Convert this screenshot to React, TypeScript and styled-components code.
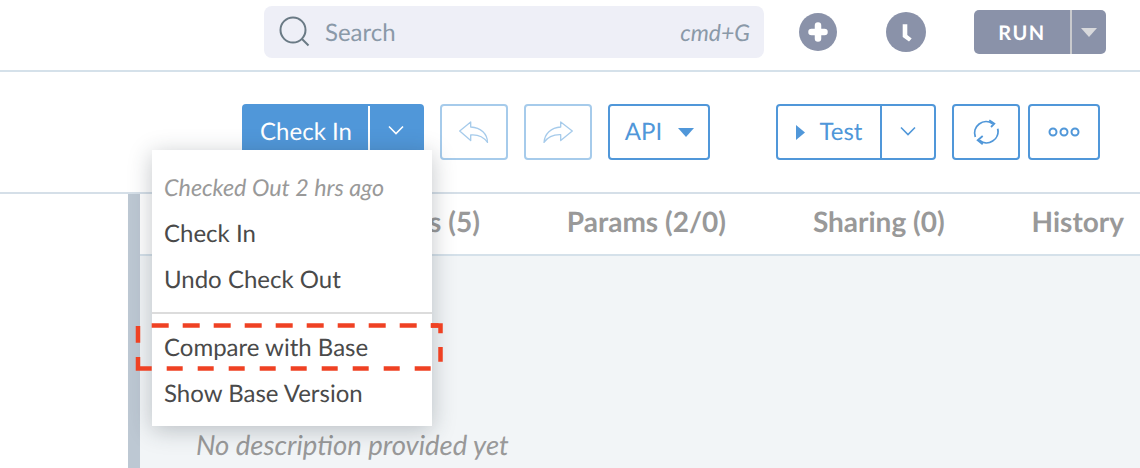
import { createGlobalStyle, styled } from 'styled-components';

const GlobalStyle = createGlobalStyle`
 html, body {
  margin: 0;
  padding: 0;
  background: #fff;
 }
 body {
  font-family: Lato, "Liberation Sans", sans-serif;
  text-rendering: geometricPrecision;
 }
 * {
  box-sizing: border-box;
 }
`;

const BLUE = '#5097d9';

const Chevron = ({ color }: { color: string }) => (
 <svg width="16" height="10" viewBox="0 0 16 10" fill="none">
  <path d="M1 1.500l7 7 7-7" stroke={color} strokeWidth="1.600" />
 </svg>
);

export default function App() {
 return (
  <Page>
   <GlobalStyle />
   <TopBar>
    <SearchBox>
     <svg width="34" height="34" viewBox="0 0 34 34" fill="none">
      <circle cx="15" cy="15" r="12.500" stroke="#6a7a85" strokeWidth="2" />
      <path d="M24 24l6.500 6.500" stroke="#6a7a85" strokeWidth="2" />
     </svg>
     <SearchLabel>Search</SearchLabel>
     <Shortcut>cmd+G</Shortcut>
    </SearchBox>
    <PlusCircle>
     <svg width="20" height="20" viewBox="0 0 20 20" fill="none">
      <path d="M3.500 10h13M10 3.500v13" stroke="#fff" strokeWidth="6.500" strokeLinecap="round" />
     </svg>
    </PlusCircle>
    <ClockCircle>
     <svg width="16" height="20" viewBox="0 0 16 20">
      <path d="M4.700 2.300h4.600V13l4.400 3.500-2.700 3-6.300-4.500z" fill="#fff" />
     </svg>
    </ClockCircle>
    <RunGroup>
     <RunLabel>RUN</RunLabel>
     <RunCaret>
      <svg width="16" height="9" viewBox="0 0 16 9">
       <path d="M0 0h16L8 9z" fill="#d8d9dc" />
      </svg>
     </RunCaret>
    </RunGroup>
   </TopBar>

   <Toolbar>
    <CheckInWrap>
     <CheckInGroup>
      <CheckInLabel>Check In</CheckInLabel>
      <CheckInCaret>
       <Chevron color="#fff" />
      </CheckInCaret>
     </CheckInGroup>
     <Menu>
      <MenuNote>Checked Out 2 hrs ago</MenuNote>
      <MenuItem>Check In</MenuItem>
      <MenuItem>Undo Check Out</MenuItem>
      <MenuDivider />
      <MenuItem>Compare with Base</MenuItem>
      <MenuItem>Show Base Version</MenuItem>
     </Menu>
    </CheckInWrap>
    <IconButton $width={68} $muted>
     <svg width="30" height="22" viewBox="0 0 30 22" fill="none">
      <path
       d="M11.700 1L.7 10l11 9.500V14c6.300-.5 12.300 1 16.800 7.500 0-8.500-6.500-15-16.800-15.500z"
       stroke="#a6cbeb"
       strokeWidth="1.300"
       strokeLinejoin="round"
      />
     </svg>
    </IconButton>
    <IconButton $width={68} $muted>
     <svg width="30" height="22" viewBox="0 0 30 22" fill="none">
      <path
       d="M17.700 1l11.600 9-11.600 9.500v-5.800c-6.700-.2-12.700 1.800-16.700 7.800.5-8.500 7-15 16.700-15.500z"
       stroke="#a6cbeb"
       strokeWidth="1.300"
       strokeLinejoin="round"
      />
     </svg>
    </IconButton>
    <ApiButton>
     <ApiLabel>API</ApiLabel>
     <svg width="16" height="9" viewBox="0 0 16 9">
      <path d="M0 0h16L8 9z" fill={BLUE} />
     </svg>
    </ApiButton>
    <TestGroup>
     <TestLabel>
      <svg width="9" height="15" viewBox="0 0 9 15">
       <path d="M0 0l9 7.500-9 7.500z" fill={BLUE} />
      </svg>
      <TestText>Test</TestText>
     </TestLabel>
     <TestCaret>
      <Chevron color={BLUE} />
     </TestCaret>
    </TestGroup>
    <IconButton $width={68}>
     <svg width="26" height="28" viewBox="0 0 26 28" fill="none" stroke={BLUE} strokeWidth="1.800">
      <path d="M2.300 19A11.500 11.500 0 0 1 19.700 5.700" />
      <path d="M24.700 10.700A11.500 11.500 0 0 1 6.300 22.300" />
      <path d="M16.300 2.300L21.300 5.700 18 9" />
      <path d="M9.700 18L4.700 22.300 9.700 26.300" />
     </svg>
    </IconButton>
    <IconButton $width={72}>
     <svg width="32" height="10" viewBox="0 0 32 10" fill="none" stroke={BLUE} strokeWidth="2">
      <circle cx="5" cy="5" r="3.500" />
      <circle cx="16" cy="5" r="3.500" />
      <circle cx="27" cy="5" r="3.500" />
     </svg>
    </IconButton>
   </Toolbar>

   <Body>
    <LeftGutter />
    <SideRail />
    <Main>
     <Tabs>
      <Tab>Steps (5)</Tab>
      <Tab>Params (2/0)</Tab>
      <Tab>Sharing (0)</Tab>
      <Tab>History</Tab>
     </Tabs>
     <Content>
      <Description>No description provided yet</Description>
     </Content>
    </Main>
   </Body>

   <Callout width="320" height="60" viewBox="130 318 320 60" fill="none" stroke="#ef4123" strokeWidth="4.500">
    <path d="M151.700 325.500H438.500" strokeDasharray="17 14" />
    <path d="M431 325.500H440.500V333.300M440.500 347V361.700" />
    <path d="M138 326V342.700M138 357V368.500H151.700" />
    <path d="M166.700 368.500H431" strokeDasharray="16 15" />
   </Callout>
  </Page>
 );
}

const Page = styled.div`
 position: relative;
 width: 1140px;
 height: 468px;
 overflow: hidden;
 background: #fff;
`;

const TopBar = styled.div`
 display: flex;
 align-items: center;
 height: 72px;
 padding: 0 34px 6px 264px;
 border-bottom: 2px solid #d5e1ea;
`;

const SearchBox = styled.div`
 display: flex;
 align-items: center;
 width: 500px;
 height: 52px;
 padding: 0 14px;
 border-radius: 8px;
 background: #eeeff7;
`;

const SearchLabel = styled.span`
 margin: 0 0 0 13px;
 font-size: 24px;
 color: #8a99a8;
`;

const Shortcut = styled.span`
 margin: 0 0 0 auto;
 font-size: 23px;
 font-style: italic;
 color: #8a99a8;
`;

const PlusCircle = styled.div`
 display: flex;
 align-items: center;
 justify-content: center;
 width: 38px;
 height: 38px;
 margin-left: 35px;
 border-radius: 50%;
 background: #8a92a9;
`;

const ClockCircle = styled.div`
 display: flex;
 align-items: center;
 justify-content: center;
 width: 40px;
 height: 40px;
 margin-left: 49px;
 border-radius: 50%;
 background: #8a92a9;
`;

const RunGroup = styled.div`
 display: flex;
 width: 132px;
 height: 44px;
 margin-left: 48px;
 border-radius: 5px;
 overflow: hidden;
 background: #8a92a9;
`;

const RunLabel = styled.div`
 display: flex;
 align-items: center;
 justify-content: center;
 width: 96px;
 padding-top: 2px;
 font-size: 20px;
 font-weight: 700;
 letter-spacing: 1.500px;
 color: #fff;
`;

const RunCaret = styled.div`
 display: flex;
 flex: 1;
 align-items: center;
 justify-content: center;
 border-left: 2px solid #c9cacd;
`;

const Toolbar = styled.div`
 display: flex;
 align-items: flex-start;
 height: 122px;
 padding: 32px 0 0 242px;
 border-bottom: 2px solid #d5dfe8;
`;

const CheckInWrap = styled.div`
 position: relative;
 margin-right: 16px;
`;

const CheckInGroup = styled.div`
 display: flex;
 width: 182px;
 height: 56px;
 border-radius: 4px;
 background: linear-gradient(#5097d9 80%, #4a8ccb);
 color: #fff;
`;

const CheckInLabel = styled.div`
 display: flex;
 align-items: center;
 justify-content: center;
 width: 126px;
 padding: 0 0 2px 2px;
 font-size: 24px;
`;

const CheckInCaret = styled.div`
 display: flex;
 flex: 1;
 align-items: center;
 justify-content: center;
 margin-top: 2px;
 padding: 0 2px 6px 0;
 border-left: 2px solid #fff;
`;

const Menu = styled.div`
 position: absolute;
 z-index: 2;
 top: 46px;
 left: -90px;
 display: flex;
 flex-direction: column;
 width: 280px;
 height: 276px;
 padding-top: 15px;
 background: #fff;
 box-shadow: 0 4px 22px rgba(40, 50, 60, 0.28);
`;

const MenuNote = styled.div`
 height: 46px;
 padding-left: 12px;
 font-size: 23.300px;
 line-height: 45px;
 font-style: italic;
 color: #999;
`;

const MenuItem = styled.div`
 height: 46px;
 padding-left: 12px;
 font-size: 24px;
 line-height: 46px;
 color: #4a4a4a;
`;

const MenuDivider = styled.div`
 height: 2px;
 margin: 9px 0 11px;
 background: #dcdcdc;
`;

const IconButton = styled.div<{ $width: number; $muted?: boolean }>`
 display: flex;
 align-items: center;
 justify-content: center;
 width: ${(p) => p.$width}px;
 height: 56px;
 margin-right: ${(p) => (p.$muted ? 16 : 8)}px;
 border: 2px solid ${(p) => (p.$muted ? '#a6cbeb' : BLUE)};
 border-radius: 4px;
`;

const ApiButton = styled.div`
 display: flex;
 align-items: center;
 justify-content: center;
 gap: 16px;
 width: 102px;
 height: 56px;
 margin-right: 66px;
 padding-left: 1px;
 border: 2px solid ${BLUE};
 border-radius: 4px;
 color: ${BLUE};
`;

const ApiLabel = styled.span`
 padding-bottom: 2px;
 font-size: 24px;
`;

const TestGroup = styled.div`
 display: flex;
 width: 160px;
 height: 56px;
 margin-right: 16px;
 border: 2px solid ${BLUE};
 border-radius: 4px;
 color: ${BLUE};
`;

const TestLabel = styled.div`
 display: flex;
 align-items: center;
 justify-content: center;
 gap: 15px;
 width: 102px;
 font-size: 24px;
`;

const TestText = styled.span`
 padding-bottom: 2px;
`;

const TestCaret = styled.div`
 display: flex;
 flex: 1;
 align-items: center;
 justify-content: center;
 padding-bottom: 2px;
 border-left: 2px solid ${BLUE};
`;

const Body = styled.div`
 display: flex;
 height: 274px;
`;

const LeftGutter = styled.div`
 width: 128px;
`;

const SideRail = styled.div`
 width: 12px;
 background: #bdc8d3;
`;

const Main = styled.div`
 display: flex;
 flex: 1;
 flex-direction: column;
`;

const Tabs = styled.div`
 display: flex;
 justify-content: flex-end;
 gap: 87px;
 height: 62px;
 padding-right: 16px;
 border-bottom: 2px solid #d5e1ea;
`;

const Tab = styled.div`
 font-size: 28px;
 font-weight: 700;
 line-height: 55px;
 color: #999;
 white-space: nowrap;
`;

const Content = styled.div`
 display: flex;
 flex: 1;
 align-items: flex-end;
 padding: 0 0 7px 56px;
 background: #f2f5f7;
`;

const Description = styled.div`
 font-size: 27.500px;
 font-style: italic;
 color: #999;
`;

const Callout = styled.svg`
 position: absolute;
 z-index: 3;
 top: 318px;
 left: 130px;
`;
